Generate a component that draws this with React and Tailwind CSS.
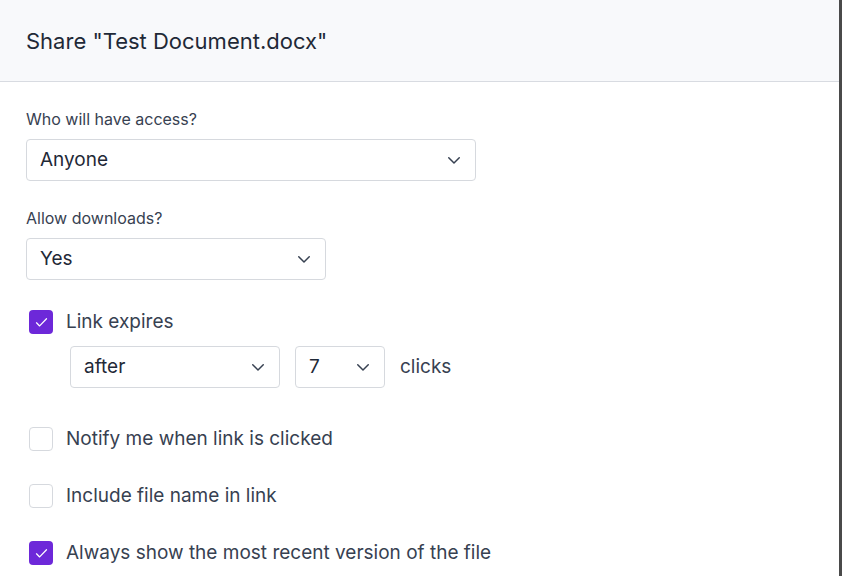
const Chevron = () => (
  <svg width="18" height="18" viewBox="0 0 24 24" fill="none" stroke="#374151" strokeWidth="2" strokeLinecap="round" strokeLinejoin="round">
    <path d="M5 9l7 7 7-7" />
  </svg>
);

const Select = ({ value, w }) => (
  <div className={`flex h-[42px] items-center justify-between rounded border border-[#d6d9de] bg-white pl-[13px] pr-[12px] text-[19px] leading-[24px] text-[#1f2937] ${w}`}>
    <span>{value}</span>
    <Chevron />
  </div>
);

const Check = ({ on, label }) => (
  <div className="flex h-[24px] items-center gap-[13px] pl-[3px]">
    {on ? (
      <div className="flex h-[24px] w-[24px] items-center justify-center rounded bg-[#6d28d9]">
        <svg width="15" height="15" viewBox="0 0 24 24" fill="none" stroke="#fff" strokeWidth="2" strokeLinecap="round" strokeLinejoin="round">
          <path d="M4 12.5l5 5L20 6" />
        </svg>
      </div>
    ) : (
      <div className="h-[24px] w-[24px] rounded border border-[#d6d9de] bg-white" />
    )}
    <span className="text-[19px] leading-[24px] text-[#374151]">{label}</span>
  </div>
);

export default function App() {
  return (
    <div className="flex h-[576px] w-[842px] overflow-hidden bg-[#4a4a4a] font-[Inter,sans-serif]" style={{ fontFamily: 'Inter, sans-serif' }}>
      <div className="h-full w-[839px] rounded-tr-md bg-white">
        <div className="flex h-[82px] items-center border-b border-[#d8dbe1] bg-[#f8f9fb] px-[26px]">
          <h1 className="text-[22px] leading-[28px] text-[#1f2937]">Share "Test Document.docx"</h1>
        </div>
        <div className="px-[26px] pt-[27px]">
          <div className="text-[16px] leading-[20px] text-[#374151]">Who will have access?</div>
          <div className="mt-[10px]"><Select value="Anyone" w="w-[450px]" /></div>
          <div className="mt-[27px] text-[16px] leading-[20px] text-[#374151]">Allow downloads?</div>
          <div className="mt-[10px]"><Select value="Yes" w="w-[300px]" /></div>
          <div className="mt-[30px]"><Check on label="Link expires" /></div>
          <div className="mt-[12px] flex items-center gap-[15px] pl-[44px]">
            <Select value="after" w="w-[210px]" />
            <Select value="7" w="w-[90px]" />
            <span className="text-[19px] leading-[24px] text-[#374151]">clicks</span>
          </div>
          <div className="mt-[39px]"><Check label="Notify me when link is clicked" /></div>
          <div className="mt-[33px]"><Check label="Include file name in link" /></div>
          <div className="mt-[33px]"><Check on label="Always show the most recent version of the file" /></div>
        </div>
      </div>
    </div>
  );
}
